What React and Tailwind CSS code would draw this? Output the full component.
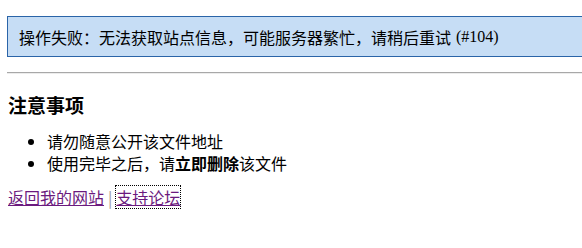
export default function App() {
  const font = { fontFamily: '"Liberation Serif", "Noto Sans CJK SC", serif' };
  return (
    <div className="min-h-screen bg-white pt-[16px] pl-[7px] text-black" style={font}>
      <div className="flex h-[41px] items-center border-y border-l border-[#2a64a8] bg-[#c6ddf5] pl-[11px] text-[16px] leading-[22px]">
        <span className="font-['Noto_Sans_CJK_SC']">操作失败：无法获取站点信息，可能服务器繁忙，请稍后重试</span>
        <span className="ml-[5px]">(#104)</span>
      </div>

      <div className="mt-[15px] h-[2px] border-t border-[#a8a8a8] bg-[#ececec]" />

      <h3 className="mt-[19px] pl-[1px] text-[19px] font-bold leading-[24px] font-['Noto_Sans_CJK_SC']">注意事项</h3>

      <ul className="mt-[13px] list-disc pl-[40px] text-[16px] leading-[22px] font-['Noto_Sans_CJK_SC']">
        <li>请勿随意公开该文件地址</li>
        <li>
          使用完毕之后，请<b>立即删除</b>该文件
        </li>
      </ul>

      <div className="mt-[12px] flex items-center pl-[1px] text-[16px] leading-[22px] font-['Noto_Sans_CJK_SC']">
        <a href="#" className="text-[#6b1a7e] underline">返回我的网站</a>
        <span className="mx-[4px] text-[#999]">|</span>
        <a href="#" className="text-[#6b1a7e] underline outline-1 outline-dotted outline-black">支持论坛</a>
      </div>
    </div>
  );
}
